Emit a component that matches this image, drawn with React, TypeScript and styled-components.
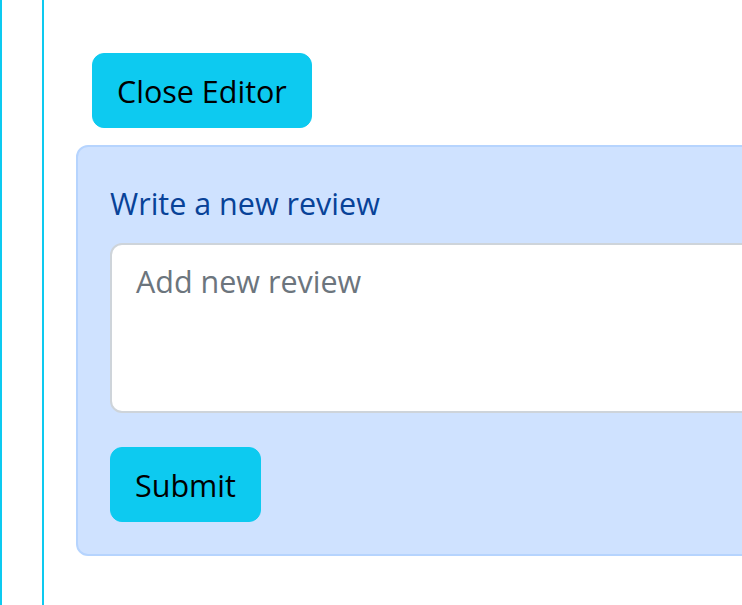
import { useState } from 'react';
import styled, { createGlobalStyle } from 'styled-components';

const GlobalStyle = createGlobalStyle`
  html, body {
    margin: 0;
    padding: 0;
    overflow: hidden;
    background: #ffffff;
  }
  body {
    font-family: 'Open Sans', 'Noto Sans', sans-serif;
    color: #212529;
  }
  * {
    box-sizing: border-box;
  }
`;

const INFO = '#0dcaf0';

const Page = styled.div`
  min-height: 100vh;
  padding-left: 40px;
  border-left: 2px solid ${INFO};
`;

const Column = styled.main`
  min-height: 100vh;
  padding: 53px 0 0 32px;
  border-left: 2px solid ${INFO};
  display: flex;
  flex-direction: column;
  align-items: flex-start;
`;

const Button = styled.button<{ $offset?: boolean }>`
  height: 75px;
  margin: 0 0 0 ${({ $offset }) => ($offset ? '16px' : '0')};
  padding: 0 24px;
  border: 1px solid ${INFO};
  border-radius: 12px;
  background-color: ${INFO};
  color: #000000;
  font-family: inherit;
  font-size: 30.5px;
  line-height: 48px;
  cursor: pointer;
`;

const Card = styled.form`
  width: 900px;
  margin-top: 17px;
  padding: 32px;
  background-color: #cfe2ff;
  border: 2px solid #b6d4fe;
  border-radius: 12px;
  display: flex;
  flex-direction: column;
  align-items: flex-start;
`;

const Label = styled.label`
  margin-bottom: 16px;
  color: #084298;
  font-size: 30.5px;
  line-height: 48px;
`;

const TextArea = styled.textarea`
  display: block;
  width: 100%;
  height: 170px;
  margin: 0 0 34px;
  padding: 12px 24px;
  border: 2px solid #ced4da;
  border-radius: 12px;
  background: #ffffff;
  color: #212529;
  font-family: inherit;
  font-size: 30.5px;
  line-height: 48px;
  resize: none;
  outline: none;

  &::placeholder {
    color: #6c757d;
  }
`;

const App = () => {
  const [review, setReview] = useState('');

  return (
    <>
      <GlobalStyle />
      <Page>
        <Column>
          <Button type="button" $offset>
            Close Editor
          </Button>
          <Card onSubmit={(e) => e.preventDefault()}>
            <Label htmlFor="review">Write a new review</Label>
            <TextArea
              id="review"
              rows={3}
              placeholder="Add new review"
              value={review}
              onChange={(e) => setReview(e.target.value)}
            />
            <Button type="submit">Submit</Button>
          </Card>
        </Column>
      </Page>
    </>
  );
};

export default App;
